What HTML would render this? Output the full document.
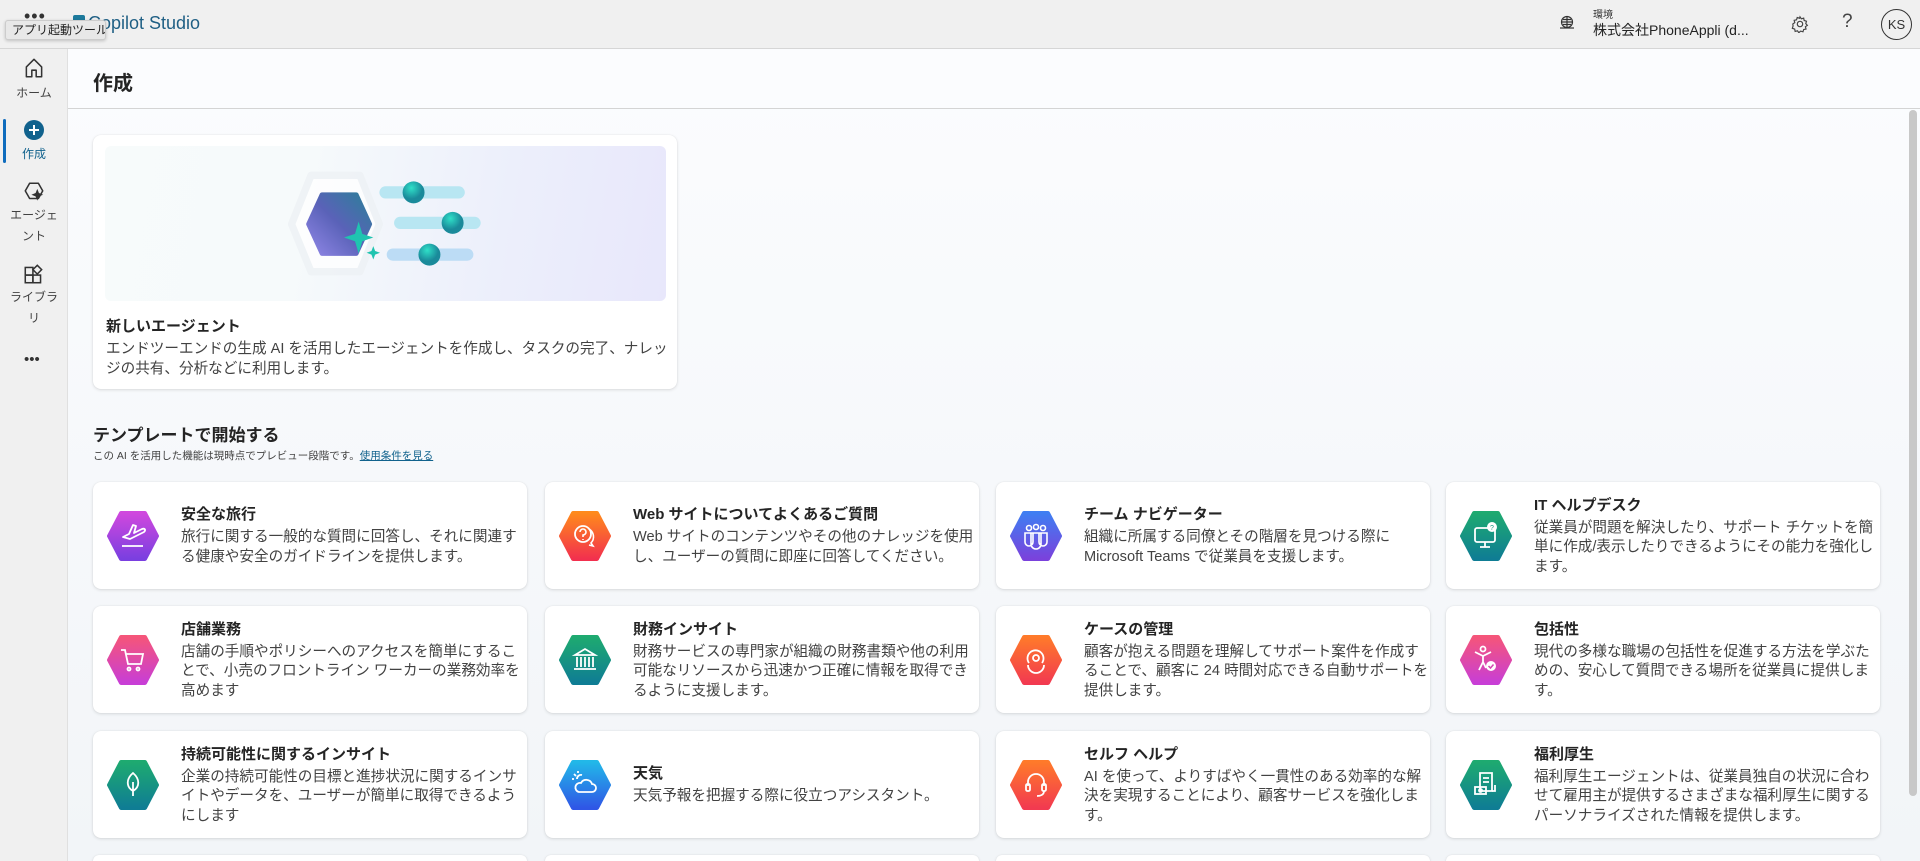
<!DOCTYPE html>
<html><head><meta charset="utf-8"><style>
*{box-sizing:border-box;margin:0;padding:0}
html{overflow:hidden;width:1920px;height:861px}
body{width:1920px;height:861px;overflow:hidden;font-family:"Liberation Sans","Noto Sans CJK JP",sans-serif;background:#f7f9fb;color:#242424;position:relative}
.top{position:absolute;left:0;top:0;width:1920px;height:49px;background:#f0f0f0;border-bottom:1px solid #d6d6d6}
.nav{position:absolute;left:0;top:49px;width:68px;height:812px;background:#f0f0f0;border-right:1px solid #e0e0e0}
.main{position:absolute;left:68px;top:49px;right:0;bottom:0;background:linear-gradient(180deg,#fbfcfe,#f2f5f8)}
.hdr{position:absolute;left:68px;top:49px;right:0;height:60px;border-bottom:1px solid #d4d4d4;background:#fbfcfe}
.hdr h1{position:absolute;left:25px;top:18px;font-size:20px;font-weight:bold}
.card{position:absolute;background:#fff;border-radius:8px;box-shadow:0 1px 3px rgba(0,0,0,.12),0 0 1px rgba(0,0,0,.1)}
.t{position:absolute;width:434px;height:107px;display:flex;align-items:center}
.t svg{position:absolute;left:14px;top:29px}
.t .tx{margin-left:88px;width:348px}
.t b{display:block;font-size:15px;margin-bottom:4px}
.t p{font-size:14.6px;line-height:19.6px;color:#424242}
.nl{position:absolute;width:68px;text-align:center;font-size:12px;color:#424242;line-height:21px}
</style></head><body>
<div class="top">
 <div style="position:absolute;left:24px;top:6px;font-size:18px;letter-spacing:1px;color:#333">•••</div>
 <svg style="position:absolute;left:73px;top:15px" width="14" height="14"><rect x="0" y="0" width="12" height="12" rx="2" fill="#1d7a9c"/></svg>
 <div style="position:absolute;left:88px;top:13px;font-size:18px;color:#1f5f84">Copilot Studio</div>
 <div style="position:absolute;left:5px;top:20px;width:101px;height:20px;background:#e8e8e8;border:1px solid #ccc;border-radius:3px;box-shadow:0 1px 3px rgba(0,0,0,.2);font-size:12px;line-height:18px;padding-left:6px;color:#222;white-space:nowrap;overflow:hidden">アプリ起動ツール</div>
 <svg style="position:absolute;left:1558px;top:14px" width="18" height="18" viewBox="0 0 18 18" fill="none" stroke="#333" stroke-width="1.2"><circle cx="9" cy="8" r="5.5"/><path d="M3.5 8h11M9 2.5v11M5 5.5h8M5 10.5h8"/><path d="M2 14h14"/></svg>
 <div style="position:absolute;left:1593px;top:6px;font-size:10px;color:#333">環境</div>
 <div style="position:absolute;left:1593px;top:20px;font-size:14px;color:#242424">株式会社PhoneAppli (d...</div>
 <svg style="position:absolute;left:1791px;top:15px" width="18" height="18" viewBox="0 0 20 20" fill="none" stroke="#444" stroke-width="1.3"><circle cx="10" cy="10" r="3"/><path d="M10 2l1.5 2.2 2.6-.7.5 2.6 2.6.8-.8 2.6 1.8 2-2.2 1.5.7 2.6-2.6.5-.8 2.6-2.6-.8-2 1.8-1.5-2.2-2.6.7-.5-2.6-2.6-.8.8-2.6L2 10l2.2-1.5-.7-2.6 2.6-.5.8-2.6 2.6.8z"/></svg>
 <div style="position:absolute;left:1842px;top:11px;font-size:19px;color:#444">?</div>
 <div style="position:absolute;left:1881px;top:9px;width:31px;height:31px;border:1px solid #333;border-radius:50%;font-size:13px;text-align:center;line-height:29px;color:#333">KS</div>
</div>
<div class="main"></div>
<div class="nav">
 <svg style="position:absolute;left:22px;top:7px" width="24" height="24" viewBox="0 0 22 22" fill="none" stroke="#333" stroke-width="1.4"><path d="M4 10L11 3l7 7v9h-5v-6H9v6H4z" stroke-linejoin="round"/></svg>
 <div class="nl" style="top:34px">ホーム</div>
 <div style="position:absolute;left:3px;top:70px;width:3px;height:44px;background:#0f6cbd;border-radius:2px"></div>
 <svg style="position:absolute;left:23px;top:70px" width="22" height="22"><circle cx="11" cy="11" r="10" fill="#11628d"/><path d="M11 6v10M6 11h10" stroke="#fff" stroke-width="2"/></svg>
 <div class="nl" style="top:95px;color:#11628d">作成</div>
 <svg style="position:absolute;left:22px;top:131px" width="24" height="24" viewBox="0 0 22 22" fill="none" stroke="#333" stroke-width="1.4"><path d="M7 3h8l4 7-4 7H7L3 10z" stroke-linejoin="round"/><path d="M14 10l1 2.5 2.5 1-2.5 1-1 2.5-1-2.5-2.5-1 2.5-1z" fill="#333"/></svg>
 <div class="nl" style="top:156px">エージェ<br>ント</div>
 <svg style="position:absolute;left:22px;top:213px" width="24" height="24" viewBox="0 0 22 22" fill="none" stroke="#333" stroke-width="1.4"><rect x="3" y="5" width="7" height="7"/><rect x="3" y="12" width="7" height="7"/><rect x="10" y="12" width="7" height="7"/><path d="M14 3l4 4-4 4-4-4z"/></svg>
 <div class="nl" style="top:238px">ライブラ<br>リ</div>
 <div style="position:absolute;left:24px;top:302px;font-size:15px;color:#333">•••</div>
</div>
<div class="hdr"><h1>作成</h1></div>
<div style="position:absolute;right:3px;top:110px;width:8px;height:686px;background:#c8c8c8;border-radius:4px"></div>

<div class="card" style="left:93px;top:135px;width:584px;height:254px">
 <div style="position:absolute;left:12px;top:11px;width:561px;height:155px;border-radius:6px;background:linear-gradient(100deg,#f7fbfb 0%,#f6fafb 35%,#eceffb 70%,#e8e7fb 100%)">
 <svg width="561" height="155" viewBox="0 0 458 127">
  <defs><linearGradient id="hx" x1="0" y1="1" x2="1" y2="0"><stop offset="0" stop-color="#8f86e6"/><stop offset=".5" stop-color="#5a62b8"/><stop offset="1" stop-color="#2d7f9a"/></linearGradient>
  <radialGradient id="kn" cx=".4" cy=".3"><stop offset="0" stop-color="#2fe0c8"/><stop offset="1" stop-color="#1a8a9a"/></radialGradient></defs>
  <path d="M168 24h40l16 40-16 39h-40l-16-39z" fill="#fff" opacity=".8" stroke="#eef2f5" stroke-width="6" stroke-linejoin="round"/>
  <path d="M177 40h28l11 24-11 24h-28l-11-24z" fill="url(#hx)" stroke="url(#hx)" stroke-width="4" stroke-linejoin="round"/>
  <path d="M207 62l3 10 9 3-9 3-3 10-3-10-9-3 9-3z" fill="#1fc4b0"/>
  <path d="M219 82l1.5 4 4 1.5-4 1.5-1.5 4-1.5-4-4-1.5 4-1.5z" fill="#1fc4b0"/>
  <rect x="224" y="33" width="70" height="10" rx="5" fill="#b8e6f2"/>
  <rect x="236" y="58" width="71" height="10" rx="5" fill="#b8e6f2"/>
  <rect x="230" y="84" width="71" height="10" rx="5" fill="#bcdcf5"/>
  <circle cx="252" cy="38" r="9" fill="url(#kn)"/><circle cx="284" cy="63" r="9" fill="url(#kn)"/><circle cx="265" cy="89" r="9" fill="url(#kn)"/>
 </svg></div>
 <div style="position:absolute;left:13px;top:180px;font-size:15px;font-weight:bold">新しいエージェント</div>
 <div style="position:absolute;left:13px;top:204px;width:566px;font-size:14.6px;line-height:20px;color:#424242">エンドツーエンドの生成 AI を活用したエージェントを作成し、タスクの完了、ナレッジの共有、分析などに利用します。</div>
</div>

<div style="position:absolute;left:93px;top:421px;font-size:17px;font-weight:bold">テンプレートで開始する</div>
<div style="position:absolute;left:93px;top:448px;font-size:10.5px;color:#424242">この AI を活用した機能は現時点でプレビュー段階です。<span style="color:#11628d;text-decoration:underline">使用条件を見る</span></div>

<svg width="0" height="0" style="position:absolute"><defs>
<linearGradient id="g1" x1="0" y1="0" x2="0" y2="1"><stop offset="0" stop-color="#d048de"/><stop offset="1" stop-color="#7a3fe0"/></linearGradient>
<linearGradient id="g2" x1="0" y1="0" x2="0" y2="1"><stop offset="0" stop-color="#ff8a1c"/><stop offset="1" stop-color="#f2304e"/></linearGradient>
<linearGradient id="g3" x1="0" y1="0" x2="0" y2="1"><stop offset="0" stop-color="#3f7ef2"/><stop offset="1" stop-color="#7a42dc"/></linearGradient>
<linearGradient id="g4" x1="0" y1="0" x2="0" y2="1"><stop offset="0" stop-color="#1eaa70"/><stop offset="1" stop-color="#0f7d94"/></linearGradient>
<linearGradient id="g5" x1="0" y1="0" x2="0" y2="1"><stop offset="0" stop-color="#f5557a"/><stop offset="1" stop-color="#c83ed6"/></linearGradient>
<linearGradient id="g6" x1="0" y1="0" x2="0" y2="1"><stop offset="0" stop-color="#22b8e8"/><stop offset="1" stop-color="#2f56e6"/></linearGradient>
<linearGradient id="g7" x1="0" y1="0" x2="0" y2="1"><stop offset="0" stop-color="#ff7a2a"/><stop offset="1" stop-color="#f23a50"/></linearGradient>
</defs></svg>

<!-- row 1 -->
<div class="card t" style="left:93px;top:482px"><svg width="52" height="50" viewBox="0 0 52 50"><path d="M14 2h24l12 23-12 23H14L2 25z" fill="url(#g1)" stroke="url(#g1)" stroke-width="4" stroke-linejoin="round"/><path d="M16 26l6-3 4-9 3 1-2 7 8-4c3-1 4 1 2 3l-14 7zM15 35h21" stroke="#fff" stroke-width="1.8" fill="none" stroke-linejoin="round"/></svg><div class="tx"><b>安全な旅行</b><p>旅行に関する一般的な質問に回答し、それに関連する健康や安全のガイドラインを提供します。</p></div></div>
<div class="card t" style="left:545px;top:482px"><svg width="52" height="50" viewBox="0 0 52 50"><path d="M14 2h24l12 23-12 23H14L2 25z" fill="url(#g2)" stroke="url(#g2)" stroke-width="4" stroke-linejoin="round"/><circle cx="24" cy="23" r="8" fill="none" stroke="#fff" stroke-width="1.8"/><path d="M21 21a3 3 0 1 1 3 3v2M24 28v1M30 18a9 9 0 0 1 2 14l2 3-4-1" stroke="#fff" stroke-width="1.6" fill="none"/></svg><div class="tx"><b>Web サイトについてよくあるご質問</b><p>Web サイトのコンテンツやその他のナレッジを使用し、ユーザーの質問に即座に回答してください。</p></div></div>
<div class="card t" style="left:996px;top:482px"><svg width="52" height="50" viewBox="0 0 52 50"><path d="M14 2h24l12 23-12 23H14L2 25z" fill="url(#g3)" stroke="url(#g3)" stroke-width="4" stroke-linejoin="round"/><g stroke="#fff" stroke-width="1.6" fill="none"><circle cx="19" cy="17" r="2.5"/><circle cx="26" cy="16" r="2.5"/><circle cx="33" cy="17" r="2.5"/><path d="M15 22h8v9a4 4 0 0 1-8 0zM29 22h8v9a4 4 0 0 1-8 0zM21 22h10v11a5 5 0 0 1-10 0z"/></g></svg><div class="tx"><b>チーム ナビゲーター</b><p>組織に所属する同僚とその階層を見つける際に Microsoft Teams で従業員を支援します。</p></div></div>
<div class="card t" style="left:1446px;top:482px"><svg width="52" height="50" viewBox="0 0 52 50"><path d="M14 2h24l12 23-12 23H14L2 25z" fill="url(#g4)" stroke="url(#g4)" stroke-width="4" stroke-linejoin="round"/><g stroke="#fff" stroke-width="1.8" fill="none"><rect x="15" y="17" width="20" height="14" rx="2"/><path d="M25 31v5M20 36h10"/></g><circle cx="32" cy="16" r="5" fill="#fff"/><text x="32" y="19" font-size="7" text-anchor="middle" fill="#1a9a80" font-family="Liberation Sans">?</text></svg><div class="tx"><b>IT ヘルプデスク</b><p>従業員が問題を解決したり、サポート チケットを簡単に作成/表示したりできるようにその能力を強化します。</p></div></div>
<!-- row 2 -->
<div class="card t" style="left:93px;top:606px"><svg width="52" height="50" viewBox="0 0 52 50"><path d="M14 2h24l12 23-12 23H14L2 25z" fill="url(#g5)" stroke="url(#g5)" stroke-width="4" stroke-linejoin="round"/><g stroke="#fff" stroke-width="1.8" fill="none"><path d="M14 15h4l3 14h13l2-10H19"/><circle cx="22" cy="34" r="1.5"/><circle cx="31" cy="34" r="1.5"/></g></svg><div class="tx"><b>店舗業務</b><p>店舗の手順やポリシーへのアクセスを簡単にすることで、小売のフロントライン ワーカーの業務効率を高めます</p></div></div>
<div class="card t" style="left:545px;top:606px"><svg width="52" height="50" viewBox="0 0 52 50"><path d="M14 2h24l12 23-12 23H14L2 25z" fill="url(#g4)" stroke="url(#g4)" stroke-width="4" stroke-linejoin="round"/><g stroke="#fff" stroke-width="1.8" fill="none"><path d="M16 20l10-6 10 6zM18 22v10M22 22v10M26 22v10M30 22v10M34 22v10M15 34h22"/></g></svg><div class="tx"><b>財務インサイト</b><p>財務サービスの専門家が組織の財務書類や他の利用可能なリソースから迅速かつ正確に情報を取得できるように支援します。</p></div></div>
<div class="card t" style="left:996px;top:606px"><svg width="52" height="50" viewBox="0 0 52 50"><path d="M14 2h24l12 23-12 23H14L2 25z" fill="url(#g7)" stroke="url(#g7)" stroke-width="4" stroke-linejoin="round"/><g stroke="#fff" stroke-width="1.8" fill="none"><path d="M19 28a8 8 0 1 1 13 0"/><circle cx="26" cy="23" r="3"/><path d="M18 30a8 8 0 0 0 16 0"/></g></svg><div class="tx"><b>ケースの管理</b><p>顧客が抱える問題を理解してサポート案件を作成することで、顧客に 24 時間対応できる自動サポートを提供します。</p></div></div>
<div class="card t" style="left:1446px;top:606px"><svg width="52" height="50" viewBox="0 0 52 50"><path d="M14 2h24l12 23-12 23H14L2 25z" fill="url(#g5)" stroke="url(#g5)" stroke-width="4" stroke-linejoin="round"/><g stroke="#fff" stroke-width="1.8" fill="none"><circle cx="23" cy="14" r="2.5"/><path d="M15 17l8 4 8-4M23 21v6l-4 8M23 27l3 6"/></g><circle cx="31" cy="31" r="5" fill="#fff"/><path d="M28.5 31l2 2 3-3.5" stroke="#d448b0" stroke-width="1.5" fill="none"/></svg><div class="tx"><b>包括性</b><p>現代の多様な職場の包括性を促進する方法を学ぶための、安心して質問できる場所を従業員に提供します。</p></div></div>
<!-- row 3 -->
<div class="card t" style="left:93px;top:731px"><svg width="52" height="50" viewBox="0 0 52 50"><path d="M14 2h24l12 23-12 23H14L2 25z" fill="url(#g4)" stroke="url(#g4)" stroke-width="4" stroke-linejoin="round"/><g stroke="#fff" stroke-width="1.8" fill="none"><path d="M26 13c-7 6-7 14 0 18 7-4 7-12 0-18zM26 22v14"/></g></svg><div class="tx"><b>持続可能性に関するインサイト</b><p>企業の持続可能性の目標と進捗状況に関するインサイトやデータを、ユーザーが簡単に取得できるようにします</p></div></div>
<div class="card t" style="left:545px;top:731px"><svg width="52" height="50" viewBox="0 0 52 50"><path d="M14 2h24l12 23-12 23H14L2 25z" fill="url(#g6)" stroke="url(#g6)" stroke-width="4" stroke-linejoin="round"/><g stroke="#fff" stroke-width="1.8" fill="none"><path d="M20 32h13a4 4 0 0 0 0-8 6 6 0 0 0-11-1 4 4 0 0 0-2 9z"/><path d="M18 19a4 4 0 0 1 5-4M15 14l2 2M19 11v2M13 19h2"/></g></svg><div class="tx"><b>天気</b><p>天気予報を把握する際に役立つアシスタント。</p></div></div>
<div class="card t" style="left:996px;top:731px"><svg width="52" height="50" viewBox="0 0 52 50"><path d="M14 2h24l12 23-12 23H14L2 25z" fill="url(#g7)" stroke="url(#g7)" stroke-width="4" stroke-linejoin="round"/><g stroke="#fff" stroke-width="1.8" fill="none"><path d="M18 26v-4a8 8 0 0 1 16 0v4"/><rect x="16" y="24" width="4" height="7" rx="1.5"/><rect x="32" y="24" width="4" height="7" rx="1.5"/><path d="M34 31c0 4-4 5-7 5"/></g></svg><div class="tx"><b>セルフ ヘルプ</b><p>AI を使って、よりすばやく一貫性のある効率的な解決を実現することにより、顧客サービスを強化します。</p></div></div>
<div class="card t" style="left:1446px;top:731px"><svg width="52" height="50" viewBox="0 0 52 50"><path d="M14 2h24l12 23-12 23H14L2 25z" fill="url(#g4)" stroke="url(#g4)" stroke-width="4" stroke-linejoin="round"/><g stroke="#fff" stroke-width="1.8" fill="none"><path d="M20 13h12v18H20zM23 18h6M23 22h6"/><rect x="15" y="27" width="11" height="7"/><circle cx="20.5" cy="30.5" r="1.5"/><path d="M32 31h3v-6"/></g></svg><div class="tx"><b>福利厚生</b><p>福利厚生エージェントは、従業員独自の状況に合わせて雇用主が提供するさまざまな福利厚生に関するパーソナライズされた情報を提供します。</p></div></div>
<!-- row 4 -->
<div class="card" style="left:93px;top:855px;width:434px;height:6px;border-radius:8px 8px 0 0"></div>
<div class="card" style="left:545px;top:855px;width:434px;height:6px;border-radius:8px 8px 0 0"></div>
<div class="card" style="left:996px;top:855px;width:434px;height:6px;border-radius:8px 8px 0 0"></div>
<div class="card" style="left:1446px;top:855px;width:434px;height:6px;border-radius:8px 8px 0 0"></div>
</body></html>
